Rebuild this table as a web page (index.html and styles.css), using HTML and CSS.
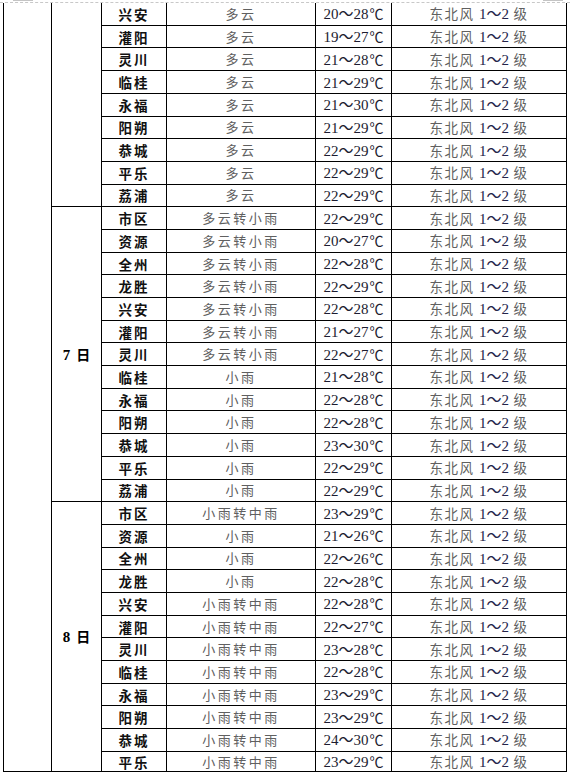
FILE: index.html
```html
<!DOCTYPE html>
<html lang="zh">
<head>
<meta charset="utf-8">
<link rel="stylesheet" href="styles.css">
</head>
<body>
<div class="page">
  <div class="pagebreak">
    <span class="mark mark-left"></span>
    <span class="mark mark-right"></span>
  </div>
  <table class="forecast">
    <colgroup>
      <col class="c-a"><col class="c-b"><col class="c-city"><col class="c-wx"><col class="c-temp"><col class="c-wind">
    </colgroup>
    <tbody>
      <tr class="first">
        <td class="blank" rowspan="34"></td>
        <td class="date" rowspan="9"></td>
        <td class="city">兴安</td><td class="wx">多云</td><td class="temp">20～28<span class="unit">℃</span></td><td class="wind">东北风 <span class="num">1～2</span> 级</td>
      </tr>
      <tr><td class="city">灌阳</td><td class="wx">多云</td><td class="temp">19～27<span class="unit">℃</span></td><td class="wind">东北风 <span class="num">1～2</span> 级</td></tr>
      <tr><td class="city">灵川</td><td class="wx">多云</td><td class="temp">21～28<span class="unit">℃</span></td><td class="wind">东北风 <span class="num">1～2</span> 级</td></tr>
      <tr><td class="city">临桂</td><td class="wx">多云</td><td class="temp">21～29<span class="unit">℃</span></td><td class="wind">东北风 <span class="num">1～2</span> 级</td></tr>
      <tr><td class="city">永福</td><td class="wx">多云</td><td class="temp">21～30<span class="unit">℃</span></td><td class="wind">东北风 <span class="num">1～2</span> 级</td></tr>
      <tr><td class="city">阳朔</td><td class="wx">多云</td><td class="temp">21～29<span class="unit">℃</span></td><td class="wind">东北风 <span class="num">1～2</span> 级</td></tr>
      <tr><td class="city">恭城</td><td class="wx">多云</td><td class="temp">22～29<span class="unit">℃</span></td><td class="wind">东北风 <span class="num">1～2</span> 级</td></tr>
      <tr><td class="city">平乐</td><td class="wx">多云</td><td class="temp">22～29<span class="unit">℃</span></td><td class="wind">东北风 <span class="num">1～2</span> 级</td></tr>
      <tr><td class="city">荔浦</td><td class="wx">多云</td><td class="temp">22～29<span class="unit">℃</span></td><td class="wind">东北风 <span class="num">1～2</span> 级</td></tr>

      <tr>
        <td class="date" rowspan="13"><span class="num">7</span> 日</td>
        <td class="city">市区</td><td class="wx">多云转小雨</td><td class="temp">22～29<span class="unit">℃</span></td><td class="wind">东北风 <span class="num">1～2</span> 级</td>
      </tr>
      <tr><td class="city">资源</td><td class="wx">多云转小雨</td><td class="temp">20～27<span class="unit">℃</span></td><td class="wind">东北风 <span class="num">1～2</span> 级</td></tr>
      <tr><td class="city">全州</td><td class="wx">多云转小雨</td><td class="temp">22～28<span class="unit">℃</span></td><td class="wind">东北风 <span class="num">1～2</span> 级</td></tr>
      <tr><td class="city">龙胜</td><td class="wx">多云转小雨</td><td class="temp">22～29<span class="unit">℃</span></td><td class="wind">东北风 <span class="num">1～2</span> 级</td></tr>
      <tr><td class="city">兴安</td><td class="wx">多云转小雨</td><td class="temp">22～28<span class="unit">℃</span></td><td class="wind">东北风 <span class="num">1～2</span> 级</td></tr>
      <tr><td class="city">灌阳</td><td class="wx">多云转小雨</td><td class="temp">21～27<span class="unit">℃</span></td><td class="wind">东北风 <span class="num">1～2</span> 级</td></tr>
      <tr><td class="city">灵川</td><td class="wx">多云转小雨</td><td class="temp">22～27<span class="unit">℃</span></td><td class="wind">东北风 <span class="num">1～2</span> 级</td></tr>
      <tr><td class="city">临桂</td><td class="wx rain">小雨</td><td class="temp">21～28<span class="unit">℃</span></td><td class="wind">东北风 <span class="num">1～2</span> 级</td></tr>
      <tr><td class="city">永福</td><td class="wx rain">小雨</td><td class="temp">22～28<span class="unit">℃</span></td><td class="wind">东北风 <span class="num">1～2</span> 级</td></tr>
      <tr><td class="city">阳朔</td><td class="wx rain">小雨</td><td class="temp">22～28<span class="unit">℃</span></td><td class="wind">东北风 <span class="num">1～2</span> 级</td></tr>
      <tr><td class="city">恭城</td><td class="wx rain">小雨</td><td class="temp">23～30<span class="unit">℃</span></td><td class="wind">东北风 <span class="num">1～2</span> 级</td></tr>
      <tr><td class="city">平乐</td><td class="wx rain">小雨</td><td class="temp">22～29<span class="unit">℃</span></td><td class="wind">东北风 <span class="num">1～2</span> 级</td></tr>
      <tr><td class="city">荔浦</td><td class="wx rain">小雨</td><td class="temp">22～29<span class="unit">℃</span></td><td class="wind">东北风 <span class="num">1～2</span> 级</td></tr>

      <tr>
        <td class="date" rowspan="12"><span class="num">8</span> 日</td>
        <td class="city">市区</td><td class="wx">小雨转中雨</td><td class="temp">23～29<span class="unit">℃</span></td><td class="wind">东北风 <span class="num">1～2</span> 级</td>
      </tr>
      <tr><td class="city">资源</td><td class="wx rain">小雨</td><td class="temp">21～26<span class="unit">℃</span></td><td class="wind">东北风 <span class="num">1～2</span> 级</td></tr>
      <tr><td class="city">全州</td><td class="wx rain">小雨</td><td class="temp">22～26<span class="unit">℃</span></td><td class="wind">东北风 <span class="num">1～2</span> 级</td></tr>
      <tr><td class="city">龙胜</td><td class="wx rain">小雨</td><td class="temp">22～28<span class="unit">℃</span></td><td class="wind">东北风 <span class="num">1～2</span> 级</td></tr>
      <tr><td class="city">兴安</td><td class="wx">小雨转中雨</td><td class="temp">22～28<span class="unit">℃</span></td><td class="wind">东北风 <span class="num">1～2</span> 级</td></tr>
      <tr><td class="city">灌阳</td><td class="wx">小雨转中雨</td><td class="temp">22～27<span class="unit">℃</span></td><td class="wind">东北风 <span class="num">1～2</span> 级</td></tr>
      <tr><td class="city">灵川</td><td class="wx">小雨转中雨</td><td class="temp">23～28<span class="unit">℃</span></td><td class="wind">东北风 <span class="num">1～2</span> 级</td></tr>
      <tr><td class="city">临桂</td><td class="wx">小雨转中雨</td><td class="temp">22～28<span class="unit">℃</span></td><td class="wind">东北风 <span class="num">1～2</span> 级</td></tr>
      <tr><td class="city">永福</td><td class="wx">小雨转中雨</td><td class="temp">23～29<span class="unit">℃</span></td><td class="wind">东北风 <span class="num">1～2</span> 级</td></tr>
      <tr><td class="city">阳朔</td><td class="wx">小雨转中雨</td><td class="temp">23～29<span class="unit">℃</span></td><td class="wind">东北风 <span class="num">1～2</span> 级</td></tr>
      <tr><td class="city">恭城</td><td class="wx">小雨转中雨</td><td class="temp">24～30<span class="unit">℃</span></td><td class="wind">东北风 <span class="num">1～2</span> 级</td></tr>
      <tr class="last"><td class="city">平乐</td><td class="wx">小雨转中雨</td><td class="temp">23～29<span class="unit">℃</span></td><td class="wind">东北风 <span class="num">1～2</span> 级</td></tr>
    </tbody>
  </table>
</div>
</body>
</html>
```

FILE: styles.css
```css
html, body {
  margin: 0;
  padding: 0;
  background: #ffffff;
}

.page {
  width: 570px;
  height: 774px;
  overflow: hidden;
  position: relative;
  font-family: "Noto Sans CJK SC", sans-serif;
}

.pagebreak {
  height: 2px;
  border-bottom: 1px dashed #c8c8c8;
  position: relative;
}

.mark {
  position: absolute;
  top: 0;
  height: 1px;
  background: #c4c4c4;
}
.mark-left { left: 13px; width: 20px; }
.mark-right { left: 543px; width: 20px; }

.forecast {
  margin-left: 3px;
  border-collapse: collapse;
  table-layout: fixed;
  width: 563px;
}

.c-a { width: 48px; }
.c-b { width: 50px; }
.c-city { width: 65px; }
.c-wx { width: 149px; }
.c-temp { width: 76px; }
.c-wind { width: 175px; }

.forecast td {
  border: 1px solid #000;
  padding: 0;
  text-align: center;
  vertical-align: middle;
  white-space: nowrap;
  line-height: 16px;
}

.forecast tr { height: 22.7px; }
.forecast tr.first { height: 22.3px; }
.forecast tr.first td { border-top: none; }
.forecast tr.last { height: 20.6px; }

.num {
  font-family: "Liberation Serif", "Noto Sans CJK SC", serif;
}

.city {
  font-size: 13.5px;
  font-weight: 700;
  letter-spacing: 2px;
  color: #111;
  padding-left: 2px;
}

.date {
  font-size: 14px;
  font-weight: 700;
  color: #000;
}
.date .num {
  font-size: 15px;
  margin-right: 3px;
}

.wx {
  font-size: 13px;
  letter-spacing: 2.5px;
  color: #606060;
  padding-left: 2px;
}

.temp {
  font-family: "Liberation Serif", "Noto Sans CJK SC", serif;
  font-size: 15px;
  color: #1c1c30;
}

.unit {
  font-family: "Noto Sans CJK SC", sans-serif;
  font-size: 14px;
  margin-left: 1px;
}

.wind {
  font-size: 13.5px;
  letter-spacing: 1.5px;
  color: #606060;
}
.wind .num {
  font-size: 15px;
  color: #24244a;
  letter-spacing: 0;
}
```
